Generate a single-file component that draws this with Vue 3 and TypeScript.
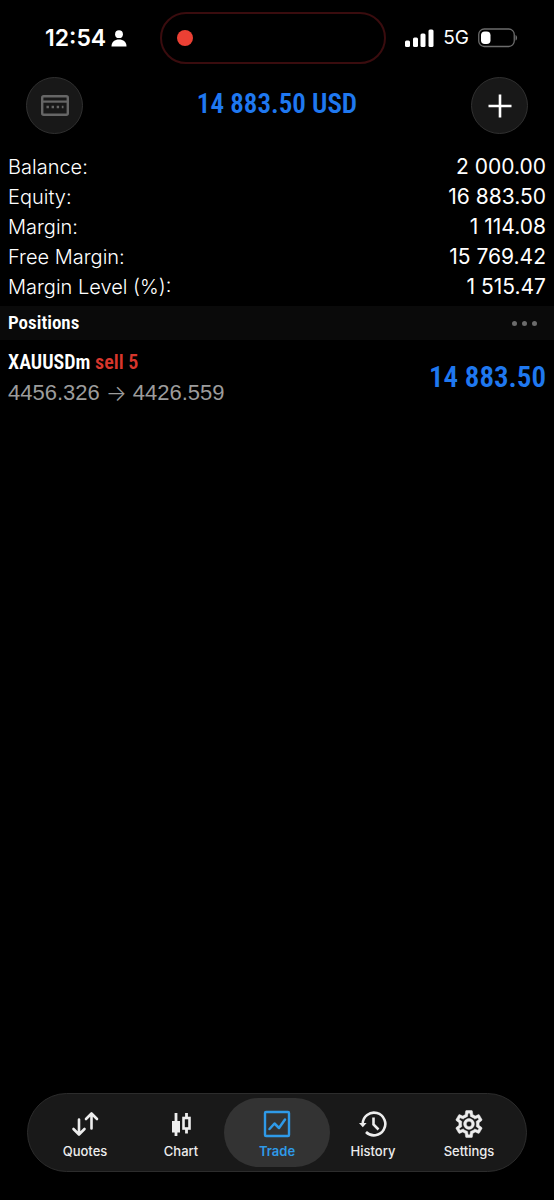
<script setup lang="ts">
interface Stat {
  label: string
  value: string
}

const stats: Stat[] = [
  { label: 'Balance:', value: '2 000.00' },
  { label: 'Equity:', value: '16 883.50' },
  { label: 'Margin:', value: '1 114.08' },
  { label: 'Free Margin:', value: '15 769.42' },
  { label: 'Margin Level (%):', value: '1 515.47' },
]

const tabs: string[] = ['Quotes', 'Chart', 'Trade', 'History', 'Settings']
const activeTab = 'Trade'
</script>

<template>
  <div class="screen">
    <div class="status-bar">
      <div class="status-left">
        <span class="clock">12:54</span>
        <svg class="person" viewBox="0 0 16 17" aria-hidden="true">
          <circle cx="8" cy="4.2" r="3.9" />
          <path d="M0.5 16.5C0.5 12 3.6 9.6 8 9.6S15.5 12 15.5 16.5Z" />
        </svg>
      </div>
      <div class="island"><span class="rec-dot"></span></div>
      <div class="status-right">
        <svg class="signal" viewBox="0 0 29 19" aria-hidden="true">
          <rect x="0" y="11.5" width="5" height="6.5" rx="1.5" />
          <rect x="8" y="8.5" width="5" height="9.5" rx="1.5" />
          <rect x="15.5" y="4.5" width="5" height="13.5" rx="1.5" />
          <rect x="23.5" y="0.5" width="5" height="17.5" rx="1.5" />
        </svg>
        <span class="network">5G</span>
        <svg class="battery" viewBox="0 0 40 20" aria-hidden="true">
          <rect x="0.75" y="1" width="35.5" height="17.5" rx="5.5" fill="none" stroke="#6c6c6c" stroke-width="1.3" />
          <rect x="3" y="3.5" width="9.5" height="12.5" rx="3.8" fill="#fff" />
          <path d="M37.5 7C39.6 7.6 39.6 12 37.5 12.6Z" fill="#6c6c6c" />
        </svg>
      </div>
    </div>

    <header class="top-bar">
      <button class="round" type="button" aria-label="Accounts">
        <svg class="card-icon" viewBox="0 0 28 21" aria-hidden="true">
          <rect x="1.2" y="1.2" width="25.6" height="18.6" rx="1.5" fill="none" stroke="#666" stroke-width="2.4" />
          <path d="M1 6.6H27" stroke="#666" stroke-width="2.2" />
          <path d="M5.5 12H22.5" stroke="#666" stroke-width="2.4" stroke-dasharray="2.4 2.7" />
        </svg>
      </button>
      <h1 class="profit">14 883.50 USD</h1>
      <button class="round add" type="button" aria-label="New order">
        <svg class="plus-icon" viewBox="0 0 24 24" aria-hidden="true">
          <path d="M12 0.5V23.5M0.5 12H23.5" stroke="#fff" stroke-width="2.6" />
        </svg>
      </button>
    </header>

    <main>
      <dl class="stats">
        <div v-for="s in stats" :key="s.label" class="stat">
          <dt>{{ s.label }}</dt>
          <dd>{{ s.value }}</dd>
        </div>
      </dl>

      <div class="section">
        <h2>Positions</h2>
        <button class="more" type="button" aria-label="More">
          <span class="dot"></span><span class="dot"></span><span class="dot"></span>
        </button>
      </div>

      <div class="position">
        <div>
          <div class="symbol">XAUUSDm <span class="side">sell 5</span></div>
          <div class="prices">
            <span>4456.326</span><span class="arrow">→</span><span>4426.559</span>
          </div>
        </div>
        <div class="gain">14 883.50</div>
      </div>
    </main>

    <nav class="tabs">
      <button
        v-for="t in tabs"
        :key="t"
        type="button"
        class="tab"
        :class="{ active: t === activeTab }"
      >
        <svg class="tab-icon" viewBox="0 0 28 28" aria-hidden="true" fill="none" stroke="currentColor">
          <g v-if="t === 'Quotes'" stroke-width="2.6" stroke-linecap="round" stroke-linejoin="round">
            <path d="M8 9.5V24M2.5 19L8 24.5L13.5 19" />
            <path d="M20.5 18.5V4M15 9L20.5 3.5L26 9" />
          </g>
          <g v-else-if="t === 'Chart'">
            <path d="M9 3V26M19.5 3V7.5M19.5 18.5V23.5" stroke-width="2.8" />
            <rect x="5" y="11" width="8" height="11.5" fill="currentColor" stroke="none" />
            <rect x="16.5" y="8" width="6" height="10.5" stroke-width="2.6" />
          </g>
          <g v-else-if="t === 'Trade'" stroke-linejoin="round" stroke-linecap="round">
            <rect x="2" y="2" width="24" height="24" rx="1" stroke-width="2.4" />
            <path d="M6.5 19L11.5 13.5L16 18L22 9.5" stroke-width="2.5" />
          </g>
          <g v-else-if="t === 'History'">
            <path d="M3.7 14A11.3 11.3 0 1 1 7 22" stroke-width="2.6" />
            <path d="M0 13H7.6L3.8 17.3Z" fill="currentColor" stroke="none" />
            <path d="M14.5 7.500V14.500L19.5 19.500" stroke-width="2.6" />
          </g>
          <g v-else fill="currentColor" stroke-width="0.35" transform="translate(-2.2 -2.2) scale(1.35)">
            <path d="M19.43 12.98c.04-.32.07-.64.07-.98 0-.34-.03-.66-.07-.98l2.11-1.65c.19-.15.24-.42.12-.64l-2-3.46c-.09-.16-.26-.25-.44-.25-.06 0-.12.01-.17.03l-2.49 1c-.52-.4-1.08-.73-1.69-.98l-.38-2.65C14.46 2.18 14.25 2 14 2h-4c-.25 0-.46.18-.49.42l-.38 2.65c-.61.25-1.17.59-1.69.98l-2.49-1c-.06-.02-.12-.03-.18-.03-.17 0-.34.09-.43.25l-2 3.46c-.13.22-.07.49.12.64l2.11 1.65c-.04.32-.07.65-.07.98 0 .33.03.66.07.98l-2.11 1.65c-.19.15-.24.42-.12.64l2 3.46c.09.16.26.25.44.25.06 0 .12-.01.17-.03l2.49-1c.52.4 1.08.73 1.69.98l.38 2.65c.03.24.24.42.49.42h4c.25 0 .46-.18.49-.42l.38-2.65c.61-.25 1.17-.59 1.69-.98l2.49 1c.06.02.12.03.18.03.17 0 .34-.09.43-.25l2-3.46c.12-.22.07-.49-.12-.64l-2.11-1.65zm-1.98-1.71c.04.31.05.52.05.73 0 .21-.02.43-.05.73l-.14 1.13.89.7 1.08.84-.7 1.21-1.27-.51-1.04-.42-.9.68c-.43.32-.84.56-1.25.73l-1.06.43-.16 1.13-.2 1.35h-1.4l-.19-1.35-.16-1.13-1.06-.43c-.43-.18-.83-.41-1.23-.71l-.91-.7-1.06.43-1.27.51-.7-1.21 1.08-.84.89-.7-.14-1.13c-.03-.31-.05-.54-.05-.74s.02-.43.05-.73l.14-1.13-.89-.7-1.08-.84.7-1.21 1.27.51 1.04.42.9-.68c.43-.32.84-.56 1.25-.73l1.06-.43.16-1.13.2-1.35h1.39l.19 1.35.16 1.13 1.06.43c.43.18.83.41 1.23.71l.91.7 1.06-.43 1.27-.51.7 1.21-1.07.85-.89.7.14 1.13zM12 8c-2.21 0-4 1.79-4 4s1.79 4 4 4 4-1.79 4-4-1.79-4-4-4zm0 6c-1.1 0-2-.9-2-2s.9-2 2-2 2 .9 2 2-.9 2-2 2z" />
          </g>
        </svg>
        <span>{{ t }}</span>
      </button>
    </nav>
  </div>
</template>

<style>
body {
  margin: 0;
  background: #000;
}
</style>

<style scoped>
.screen {
  display: flex;
  flex-direction: column;
  min-height: 100vh;
  box-sizing: border-box;
  padding-bottom: 28px;
  background: #000;
  color: #fff;
  font-family: Inter, 'Liberation Sans', sans-serif;
}

button {
  padding: 0;
  border: 0;
  background: none;
  color: inherit;
  font: inherit;
}

svg {
  display: block;
  flex: none;
}

.status-bar {
  display: grid;
  grid-template-columns: 1fr 226px 1fr;
  align-items: center;
  padding: 12px 36px 0 28px;
}

.status-left,
.status-right {
  display: flex;
  align-items: center;
}

.status-left {
  gap: 5px;
  padding-left: 17px;
}

.status-right {
  justify-content: flex-end;
  gap: 9px;
}

.clock {
  font-size: 23px;
  font-weight: 600;
  line-height: 28px;
}

.person {
  width: 16px;
  height: 17px;
  fill: #fff;
}

.island {
  display: flex;
  align-items: center;
  height: 52px;
  box-sizing: border-box;
  padding-left: 15px;
  border: 2px solid #3a0c0e;
  border-radius: 26px;
}

.rec-dot {
  width: 16px;
  height: 16px;
  border-radius: 50%;
  background: #eb4034;
}

.signal {
  width: 29px;
  height: 19px;
  fill: #fff;
}

.network {
  font-size: 19px;
  line-height: 24px;
}

.battery {
  width: 40px;
  height: 20px;
}

.top-bar {
  display: flex;
  align-items: center;
  justify-content: space-between;
  padding: 13px 26px 0;
}

.round {
  display: flex;
  align-items: center;
  justify-content: center;
  width: 57px;
  height: 57px;
  box-sizing: border-box;
  border: 1px solid #303030;
  border-radius: 50%;
  background: #181818;
}

.card-icon {
  width: 28px;
  height: 21px;
}

.plus-icon {
  width: 24px;
  height: 24px;
}

.profit,
.gain,
.symbol,
.section h2 {
  margin: 0;
  font-family: 'Roboto Condensed', 'Liberation Sans Narrow', 'Liberation Sans', sans-serif;
  font-weight: 600;
}

.profit {
  padding-bottom: 3px;
  color: #1f78f0;
  font-size: 27px;
  line-height: 32px;
}

.stats {
  margin: 0;
  padding: 18px 8px 4px;
}

.stat {
  display: flex;
  justify-content: space-between;
  font-size: 20px;
  line-height: 30px;
}

.stat dt {
  font-weight: 300;
}

.stat dd {
  margin: 0;
  font-size: 21px;
}

.section {
  display: flex;
  align-items: center;
  justify-content: space-between;
  height: 34px;
  padding: 0 17px 0 8px;
  background: #0a0a0a;
}

.section h2 {
  font-size: 19px;
  line-height: 24px;
}

.more {
  display: flex;
  gap: 5px;
}

.dot {
  width: 5px;
  height: 5px;
  border-radius: 50%;
  background: #6b6b6b;
}

.position {
  display: flex;
  align-items: center;
  justify-content: space-between;
  padding: 6px 8px 0;
}

.symbol {
  font-size: 20px;
  line-height: 32px;
}

.side {
  color: #d8362c;
}

.prices {
  display: flex;
  align-items: center;
  gap: 6px;
  color: #9c9c9c;
  font-family: 'Liberation Sans', sans-serif;
  font-size: 22px;
  line-height: 30px;
}

.arrow {
  font-family: Inter, sans-serif;
  font-weight: 300;
}

.gain {
  color: #1f78f0;
  font-size: 29px;
  line-height: 36px;
}

.tabs {
  display: grid;
  grid-template-columns: repeat(5, 1fr);
  margin: auto 27px 0;
  padding: 4px 9px;
  border: 1px solid #2c2c2c;
  border-radius: 40px;
  background: #191919;
}

.tab {
  display: flex;
  flex-direction: column;
  align-items: center;
  gap: 4px;
  padding: 12px 0 7px;
  border-radius: 35px;
  color: #ededed;
  font-size: 13px;
  font-weight: 500;
  line-height: 18px;
}

.tab.active {
  margin: 0 -5px;
  background: #333;
  color: #2f9ae8;
  font-weight: 600;
}

.tab-icon {
  width: 28px;
  height: 28px;
}
</style>
